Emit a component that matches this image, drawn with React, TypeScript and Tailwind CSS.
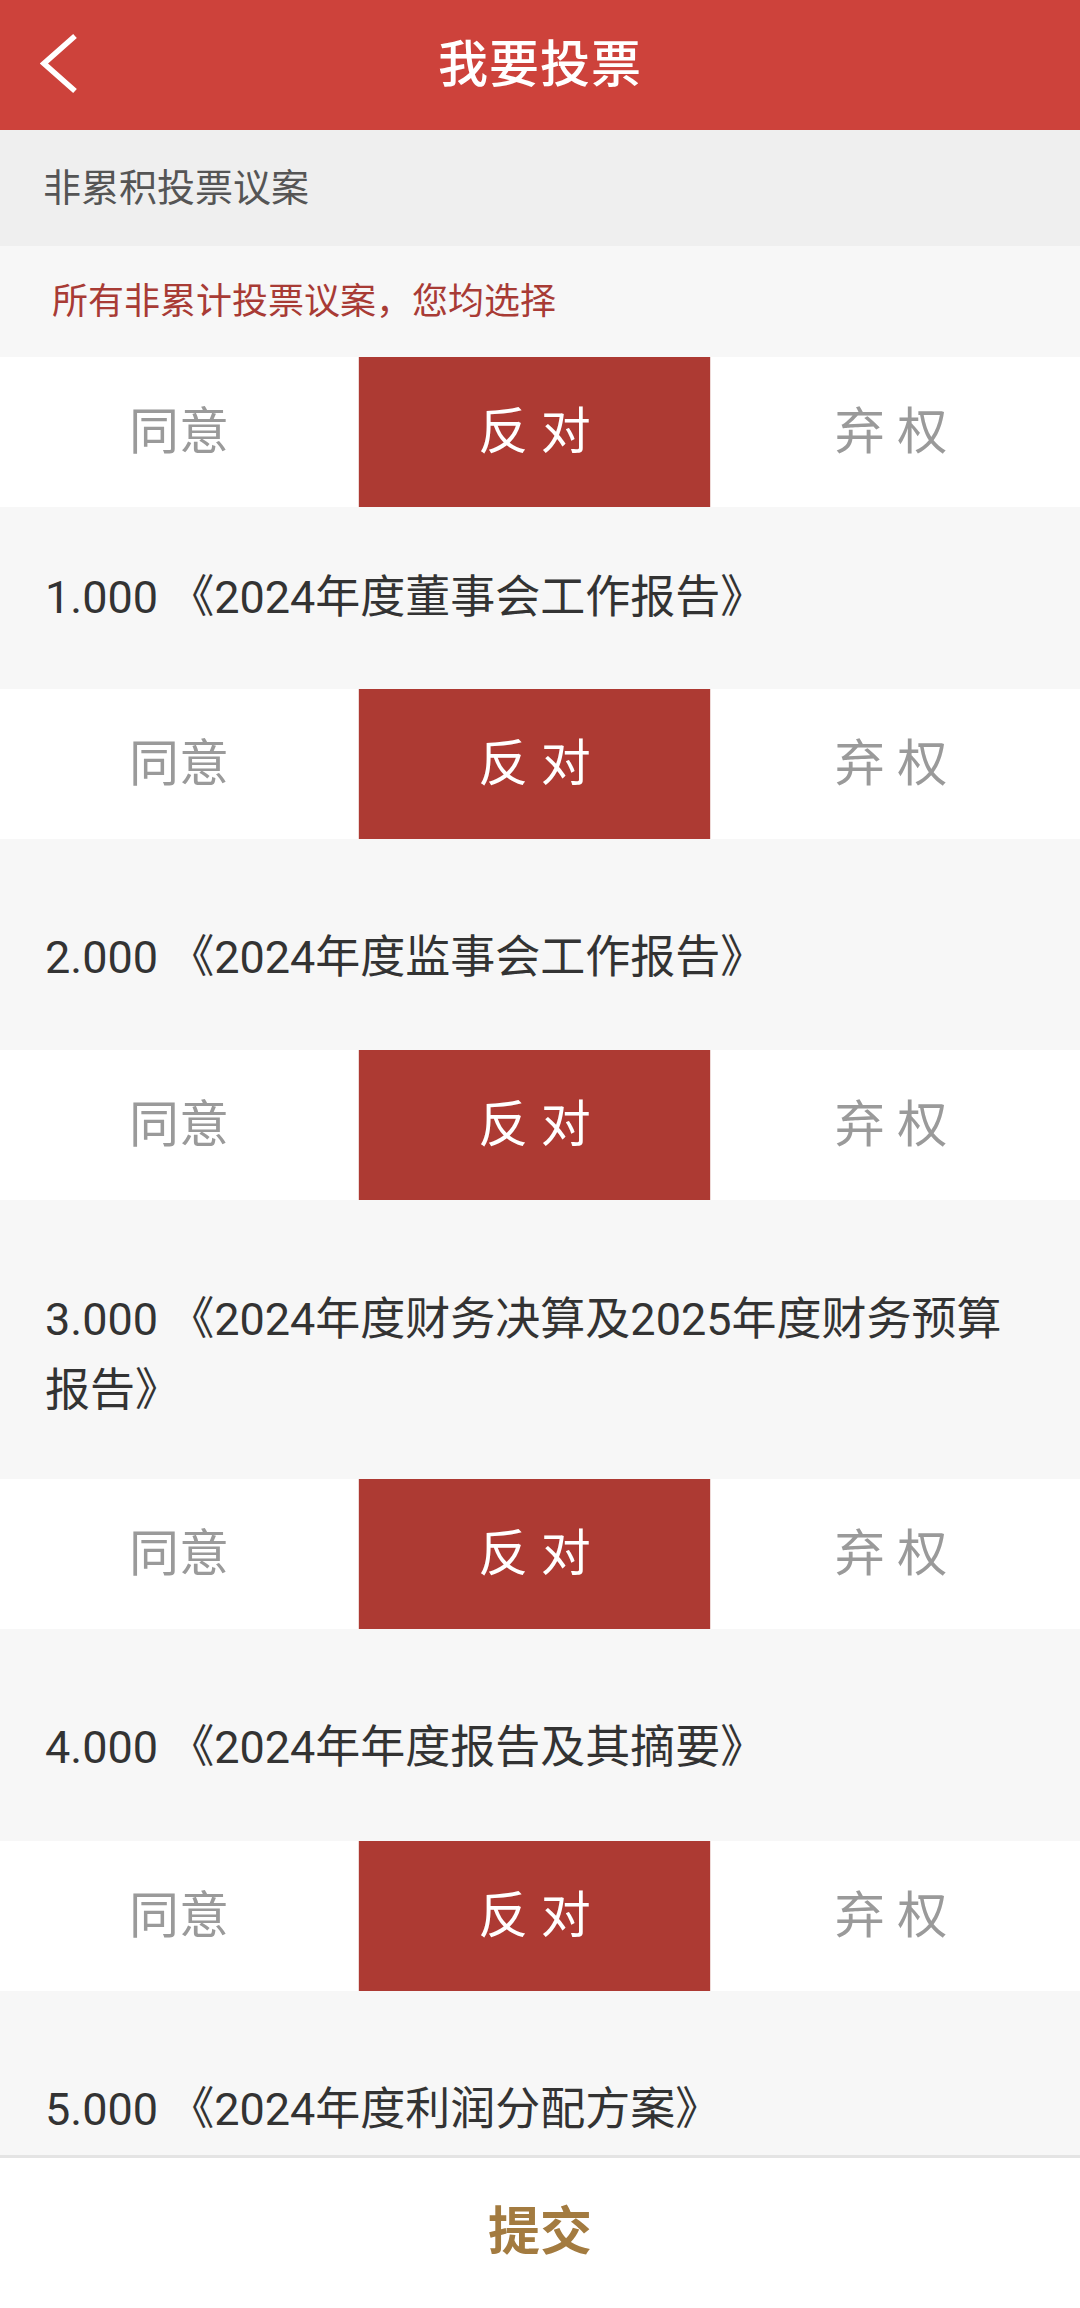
import React, { useState } from 'react';

type Choice = 'agree' | 'against' | 'abstain';

const proposals = [
  { id: 1, title: '1.000 《2024年度董事会工作报告》', pad: 'pt-[55px] pb-[56px]' },
  { id: 2, title: '2.000 《2024年度监事会工作报告》', pad: 'pt-[83px] pb-[57px]' },
  { id: 3, title: '3.000 《2024年度财务决算及2025年度财务预算报告》', pad: 'pt-[84px] pb-[53px]' },
  { id: 4, title: '4.000 《2024年年度报告及其摘要》', pad: 'pt-[83px] pb-[58px]' },
  { id: 5, title: '5.000 《2024年度利润分配方案》', pad: 'pt-[83px] pb-[57px]' },
];

function VoteRow({ value, onChange }: { value: Choice; onChange: (c: Choice) => void }) {
  const cell = 'h-[150px] flex items-center justify-center text-[50px]';
  return (
    <div className="flex bg-white">
      <button
        onClick={() => onChange('agree')}
        className={`${cell} w-[358px] ${value === 'agree' ? 'bg-[#AD3A33] text-white' : 'text-[#9a9a9a]'}`}
      >
        同意
      </button>
      <button
        onClick={() => onChange('against')}
        className={`${cell} w-[353px] border-x border-[#EEDAD8] ${value === 'against' ? 'bg-[#AD3A33] text-white' : 'text-[#9a9a9a]'}`}
      >
        反 对
      </button>
      <button
        onClick={() => onChange('abstain')}
        className={`${cell} flex-1 pr-[9px] ${value === 'abstain' ? 'bg-[#AD3A33] text-white' : 'text-[#9a9a9a]'}`}
      >
        弃 权
      </button>
    </div>
  );
}

export default function App() {
  const [all, setAll] = useState<Choice>('against');
  const [votes, setVotes] = useState<Record<number, Choice>>({ 1: 'against', 2: 'against', 3: 'against', 4: 'against', 5: 'against' });

  const setAllVotes = (c: Choice) => {
    setAll(c);
    setVotes({ 1: c, 2: c, 3: c, 4: c, 5: c });
  };

  return (
    <div className="w-[1080px] h-[2308px] flex flex-col overflow-hidden bg-white font-['Roboto','Noto_Sans_CJK_SC',sans-serif]">
      {/* header */}
      <div className="relative h-[130px] shrink-0 bg-[#CD423B] flex items-center justify-center">
        <button className="absolute left-[40px] top-[32px]">
          <svg width="40" height="64" viewBox="0 0 40 64" fill="none">
            <polyline points="35,4 4,31.5 35,59" stroke="#fff" strokeWidth="5.5" strokeLinejoin="miter" />
          </svg>
        </button>
        <h1 className="text-white text-[50px] font-medium tracking-[1px]">我要投票</h1>
      </div>

      <div className="flex-1 min-h-0 overflow-hidden">
        <div className="h-[116px] bg-[#EFEFEF] flex items-center pl-[43px] text-[38px] text-[#555]">非累积投票议案</div>
        <div className="h-[111px] bg-[#F7F7F7] flex items-center pl-[52px] text-[36px] text-[#A83B35]">
          所有非累计投票议案，您均选择
        </div>
        <VoteRow value={all} onChange={setAllVotes} />

        {proposals.map((p) => (
          <div key={p.id}>
            <div className={`bg-[#F7F7F7] px-[45px] ${p.pad} text-[45px] leading-[71px] text-[#333]`}>{p.title}</div>
            {p.id < 5 && (
              <VoteRow value={votes[p.id]} onChange={(c) => setVotes({ ...votes, [p.id]: c })} />
            )}
          </div>
        ))}
      </div>

      {/* footer */}
      <div className="h-[153px] shrink-0 border-t-[3px] border-[#E4E4E4] bg-white flex items-center justify-center">
        <button className="text-[52px] font-bold text-[#A37B40]">提交</button>
      </div>
    </div>
  );
}
